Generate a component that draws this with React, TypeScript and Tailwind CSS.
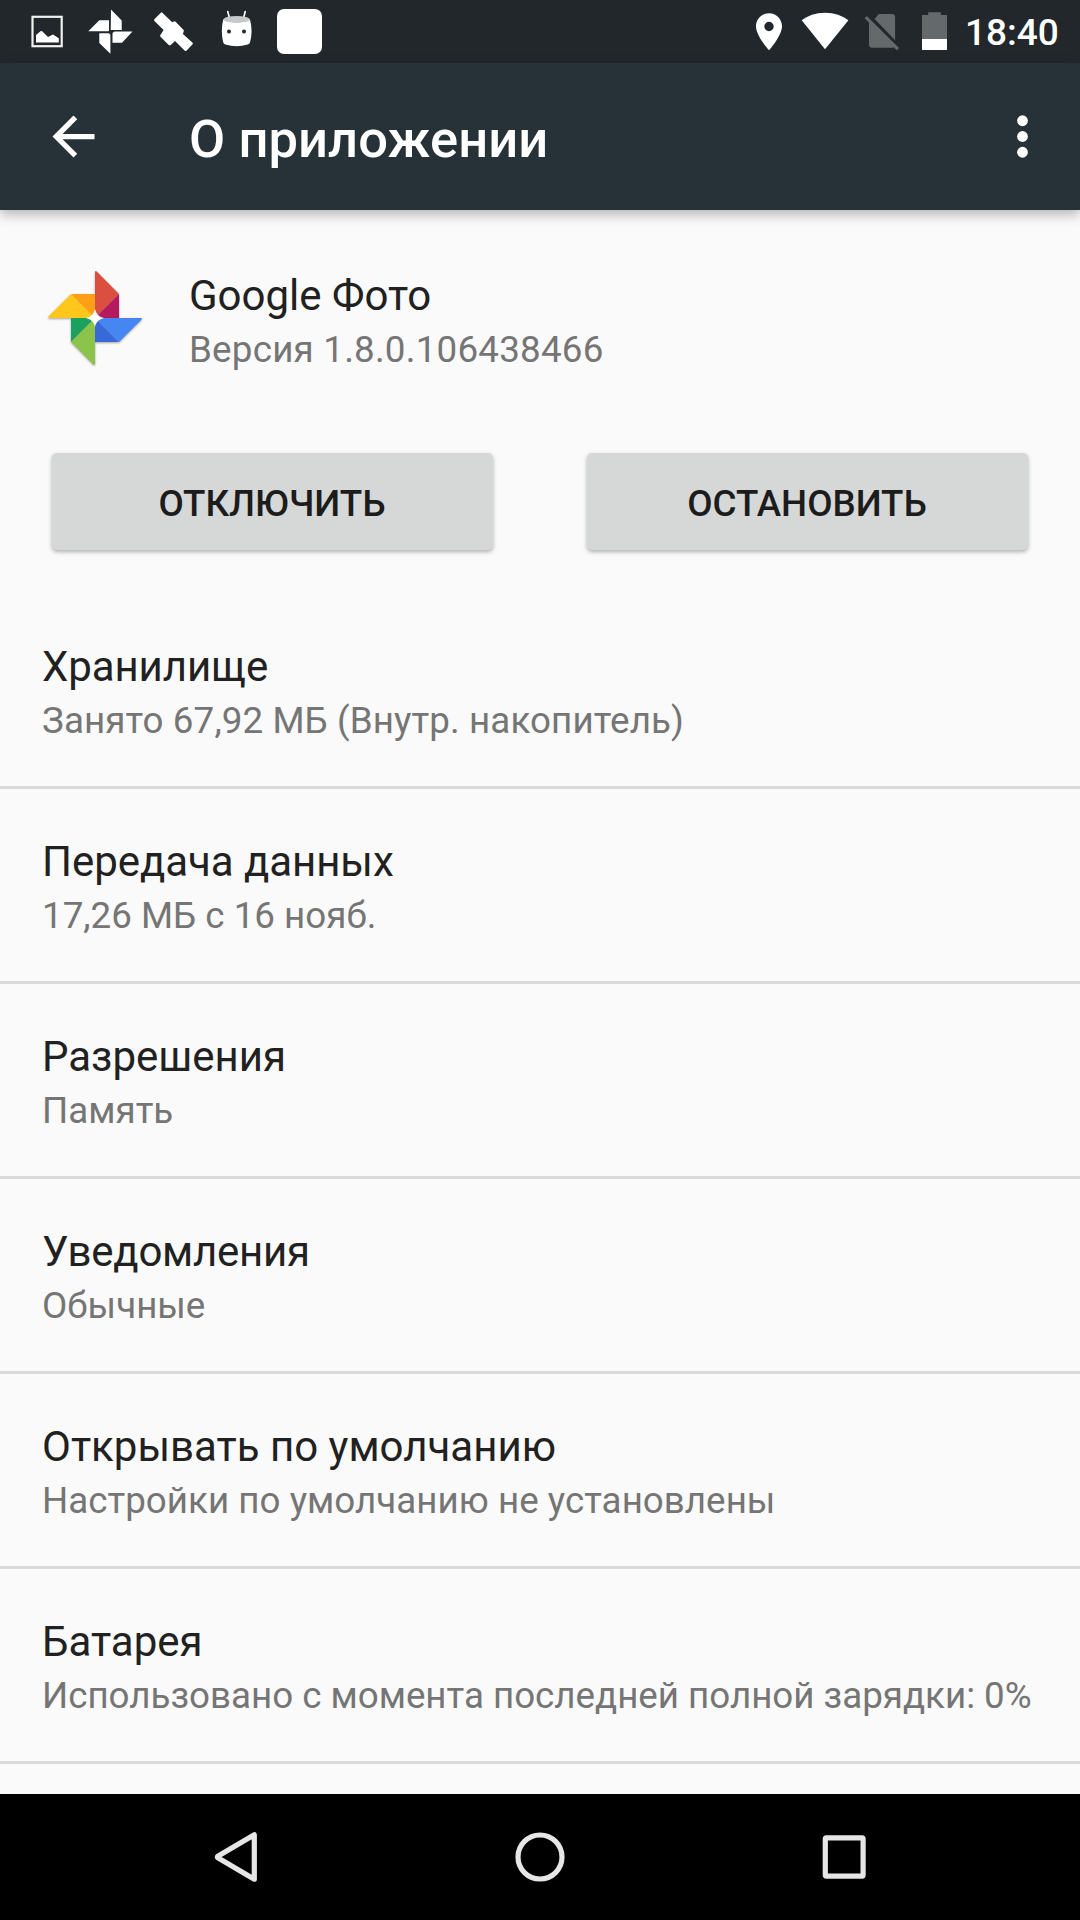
import type { ReactNode } from 'react';

const ROWS: { title: string; summary: string; titleClass?: string; summaryClass?: string }[] = [
  {
    title: 'Хранилище',
    summary: 'Занято 67,92 МБ (Внутр. накопитель)',
    titleClass: 'tracking-[-0.1px]',
    summaryClass: 'tracking-[0.1px]',
  },
  { title: 'Передача данных', summary: '17,26 МБ с 16 нояб.', titleClass: 'tracking-[-0.05px]' },
  { title: 'Разрешения', summary: 'Память' },
  { title: 'Уведомления', summary: 'Обычные', titleClass: 'tracking-[-0.25px]' },
  {
    title: 'Открывать по умолчанию',
    summary: 'Настройки по умолчанию не установлены',
    summaryClass: 'tracking-[0.02px]',
  },
  {
    title: 'Батарея',
    summary: 'Использовано с момента последней полной зарядки: 0%',
    summaryClass: 'tracking-[-0.02px]',
  },
];

function NotificationIcons() {
  return (
    <svg className="h-[63px] w-[340px]" viewBox="0 0 340 63" fill="#fff">
      {/* Picture */}
      <rect x="32.5" y="16.8" width="29.2" height="29.4" fill="none" stroke="#f0f2ee" strokeWidth="2.2" />
      <path d="M36 42.5V35l4.8-4 1.4.2 5.8 5.8 5-2.5 5.8 3.7v4.3z" />
      {/* Photos */}
      <path d="M111 9.5l10.7 11V30h-11zM88.3 31.3l11-11H109v10.8l-1 .2zM99.3 33.3H109l1.4 1.5v19L99.3 43zM112.5 33l2-1.6h18L122 42.7h-9.5z" />
      {/* Satellite */}
      <path d="M154.4 19.3l6.4-6.6q.8-.7 1.6 0l9.8 9.5 1.6-.8q1-.5 1.8.3l7.8 8q.8.8.3 1.8l-.8 2.4 9.7 8.8q.7.8 0 1.6l-6.2 6.5q-.8.6-1.6-.1l-9.8-9.700-4.300 4q-1 .7-2 0l-8.200-8.200q-.8-.9-.1-1.900l3.200-5-9.200-9q-.7-.8 0-1.600z" />
      {/* Marshmallow head */}
      <path d="M227.8 11.6l1.8 7.2M245.2 11.6l-1.8 7.2" stroke="#fff" strokeWidth="1.7" strokeLinecap="round" />
      <path d="M223.2 19.5q13.4 5.5 26.8 0 3.2 12 0 22.8-.4 1.7-2.2 2.3-11.2 3.5-22.4 0-1.8-.6-2.2-2.3-2.8-10.8 0-22.8z" />
      <ellipse cx="236.6" cy="19.4" rx="13.2" ry="3.5" fill="#c5c7c8" />
      <circle cx="229" cy="31.6" r="2" fill="#21272b" />
      <circle cx="244" cy="31.6" r="2" fill="#21272b" />
      <rect x="277" y="9" width="45" height="45" rx="7" />
    </svg>
  );
}

function SystemIcons() {
  return (
    <svg className="h-[63px] w-[200px]" viewBox="750 0 200 63" fill="#fff">
      <path
        fillRule="evenodd"
        d="M769 13.2c-7.3 0-13 5.8-13 13 0 9.6 13 24.1 13 24.1s13-14.5 13-24.1c0-7.2-5.7-13-13-13zm0 8.6a4.7 4.7 0 1 1 0 9.4 4.7 4.7 0 0 1 0-9.4z"
      />
      <path d="M825 49.3L848.4 20.3C842.5 15.8 834.5 12.7 825 12.7S807.5 15.8 801.7 20.3z" />
      <g fill="#64696c">
        <path d="M878.8 14h13.3q3 0 3 3v23.3L874.5 19zM869 21.5l25.5 25.5q-.8.7-2.4.7h-20.1q-3 0-3-3z" />
        <path d="M864.6 18.2l2.2-2.3L899 48l-2.2 2.3z" />
        <path d="M922 39V15h6.2v-2.8h12.6V15h6.2v24z" />
      </g>
      <path d="M922 39h25v11h-25z" />
    </svg>
  );
}

function StatusBar() {
  return (
    <div className="flex h-[63px] items-center justify-between bg-[#21272b]">
      <NotificationIcons />
      <div className="flex items-center">
        <SystemIcons />
        <span className="w-[130px] pl-[15px] pt-[2px] text-[37px] font-medium leading-[63px] text-white">18:40</span>
      </div>
    </div>
  );
}

function Toolbar() {
  return (
    <header className="relative z-10 flex h-[147px] items-center bg-[#263238] text-white shadow-[0_4px_12px_rgba(0,0,0,0.3)]">
      <svg className="ml-[42px] size-[63px]" viewBox="0 0 24 24" fill="currentColor">
        <path d="M20 11H7.83l5.59-5.59L12 4l-8 8 8 8 1.41-1.41L7.83 13H20z" />
      </svg>
      <h1 className="ml-[84px] flex-1 pt-[5px] text-[52.5px] font-medium leading-[62px] tracking-[0.08px]">О приложении</h1>
      <svg className="mr-[26px] size-[63px]" viewBox="0 0 24 24" fill="currentColor">
        <circle cx="12" cy="6" r="2.05" />
        <circle cx="12" cy="12" r="2.05" />
        <circle cx="12" cy="18" r="2.05" />
      </svg>
    </header>
  );
}

function PhotosLogo() {
  return (
    <svg className="size-[126px] drop-shadow-[0_1px_1px_rgba(0,0,0,0.35)]" viewBox="0 0 126 126">
      <path fill="#db4f41" d="M63 63V17.5q0-2.5 2-.8L87 39z" />
      <path fill="#b5195e" d="M63 63l24-24v24z" />
      <path fill="#ff9f16" d="M39 39h24v24z" />
      <path fill="#ffc71c" d="M63 63H17.5q-2.5 0-.8-1.8L39 39z" />
      <path fill="#1ba15f" d="M39 63h24L39 87z" />
      <path fill="#8bc34b" d="M63 63v45.5q0 2.5-1.8.8L39 87z" />
      <path fill="#3869d8" d="M63 63l24 24H63z" />
      <path fill="#4586f3" d="M63 63h45.5q2.5 0 .8 1.8L87 87z" />
      <path fill="#fff" d="M63 54q1.5 7.5 9 9-7.5 1.5-9 9-1.5-7.5-9-9 7.5-1.5 9-9z" />
    </svg>
  );
}

function ActionButton({ children }: { children: ReactNode }) {
  return (
    <button className="h-[97px] w-[441px] rounded-[5px] bg-[#d6d8d7] pt-[4px] text-[36.75px] font-medium leading-[44px] text-[#1c1c1c] shadow-[0_2px_4px_rgba(0,0,0,0.3)]">
      {children}
    </button>
  );
}

function NavigationBar() {
  return (
    <nav className="h-[126px] shrink-0 bg-black">
      <svg className="size-full" viewBox="0 0 1080 126" fill="none" stroke="#e6e6e6" strokeWidth="5.2" strokeLinejoin="round">
        <path d="M254.3 40.8v44.4L217.8 63.8q-1-.8 0-1.6z" />
        <circle cx="540" cy="63" r="22" />
        <rect x="825.3" y="43.9" width="37.8" height="38.2" rx="1" />
      </svg>
    </nav>
  );
}

export default function App() {
  return (
    <div className="flex h-[1920px] w-[1080px] flex-col overflow-hidden bg-[#fafafa] font-[Roboto,sans-serif] text-[#212121]">
      <StatusBar />
      <Toolbar />

      <main className="min-h-0 flex-1 overflow-hidden">
        <div className="flex h-[243px] items-start pl-[31.5px]">
          <div className="pt-[45px]">
            <PhotosLogo />
          </div>
          <div className="ml-[31.5px] pt-[58px]">
            <h2 className="text-[42px] leading-[56px]">Google Фото</h2>
            <p className="text-[36.75px] leading-[52px] tracking-[0.22px] text-[#757575]">Версия 1.8.0.106438466</p>
          </div>
        </div>

        <div className="flex h-[141px] items-start justify-between pl-[51.5px] pr-[52.5px]">
          <ActionButton>ОТКЛЮЧИТЬ</ActionButton>
          <ActionButton>ОСТАНОВИТЬ</ActionButton>
        </div>

        <ul>
          {ROWS.map(({ title, summary, titleClass = '', summaryClass = '' }) => (
            <li key={title} className="h-[195px] whitespace-nowrap border-b-[3px] border-[#dadada] pl-[42px] pt-[45px]">
              <h3 className={`text-[42px] leading-[56px] ${titleClass}`}>{title}</h3>
              <p className={`text-[36.75px] leading-[52px] text-[#757575] ${summaryClass}`}>{summary}</p>
            </li>
          ))}
        </ul>
      </main>

      <NavigationBar />
    </div>
  );
}
